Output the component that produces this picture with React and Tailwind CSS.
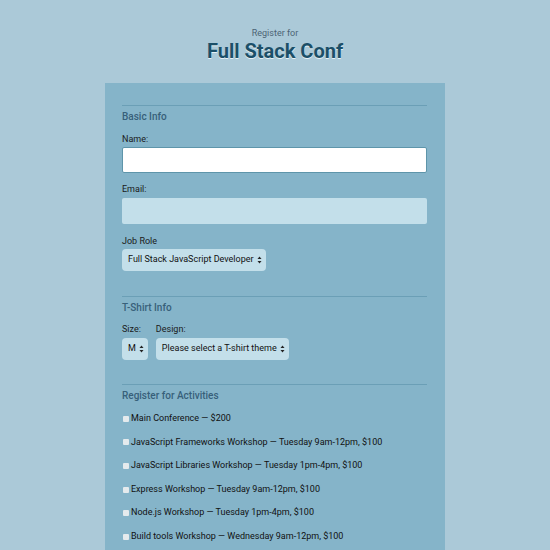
const activities = [
  "Main Conference — $200",
  "JavaScript Frameworks Workshop — Tuesday 9am-12pm, $100",
  "JavaScript Libraries Workshop — Tuesday 1pm-4pm, $100",
  "Express Workshop — Tuesday 9am-12pm, $100",
  "Node.js Workshop — Tuesday 1pm-4pm, $100",
  "Build tools Workshop — Wednesday 9am-12pm, $100",
];

function Arrows() {
  return (
    <svg width="5" height="8" viewBox="0 0 5 8" className="ml-[3px] shrink-0">
      <path d="M2.5 0.5 L4.5 3 L0.5 3 Z" fill="#222" />
      <path d="M2.5 7.5 L4.5 5 L0.5 5 Z" fill="#222" />
    </svg>
  );
}

function Select({ label, className }) {
  return (
    <div
      className={
        "flex items-center h-[22px] rounded-[4px] bg-[#c3dfea] pl-[6px] pr-[4px] text-[9px] text-[#111] " +
        (className || "")
      }
    >
      <span className="whitespace-nowrap">{label}</span>
      <Arrows />
    </div>
  );
}

function SectionTitle({ children }) {
  return (
    <div className="border-t border-[#6b9fb6] pt-[3px] text-[10px] leading-[15px] font-medium text-[#37607a]">
      {children}
    </div>
  );
}

export default function App() {
  return (
    <div
      className="w-[550px] h-[550px] overflow-hidden bg-[#abc9d8]"
      style={{ fontFamily: "Roboto, 'Liberation Sans', sans-serif" }}
    >
      <header className="flex flex-col items-center pt-[28px]">
        <div className="text-[9px] leading-[11px] text-[#4c6474]">Register for</div>
        <h1 className="text-[20px] leading-[25px] font-bold text-[#1b4f68] [text-shadow:0_1px_0_#e6f1f6]">
          Full Stack Conf
        </h1>
      </header>

      <div className="mx-auto mt-[19px] w-[340px] h-[500px] bg-[#85b4c9] pl-[17px] pr-[18px] pt-[22px]">
        <SectionTitle>Basic Info</SectionTitle>
        <div className="mt-[10px] text-[9px] leading-[11px] text-[#1a1a1a]">Name:</div>
        <div className="mt-[2px] h-[26px] rounded-[2px] border border-[#5e95aa] bg-white" />
        <div className="mt-[11px] text-[9px] leading-[11px] text-[#1a1a1a]">Email:</div>
        <div className="mt-[3px] h-[26px] rounded-[2px] bg-[#c3dfea]" />
        <div className="mt-[12px] text-[9px] leading-[11px] text-[#1a1a1a]">Job Role</div>
        <Select label="Full Stack JavaScript Developer" className="mt-[2px] w-fit" />

        <div className="mt-[25px]">
          <SectionTitle>T-Shirt Info</SectionTitle>
        </div>
        <div className="mt-[9px] flex gap-[8px]">
          <div className="flex flex-col">
            <div className="text-[9px] leading-[11px] text-[#1a1a1a]">Size:</div>
            <Select label="M" className="mt-[3px] w-fit" />
          </div>
          <div className="flex flex-col">
            <div className="text-[9px] leading-[11px] text-[#1a1a1a]">Design:</div>
            <Select label="Please select a T-shirt theme" className="mt-[3px] w-fit" />
          </div>
        </div>

        <div className="mt-[24px]">
          <SectionTitle>Register for Activities</SectionTitle>
        </div>
        <ul className="mt-[4px] flex flex-col">
          {activities.map((a) => (
            <li key={a} className="flex items-center h-[23.6px] text-[9px] text-[#111]">
              <span className="ml-[1px] mr-[2px] inline-block h-[6px] w-[6px] rounded-[1px] bg-[#e4eaed]" />
              {a}
            </li>
          ))}
        </ul>
      </div>
    </div>
  );
}
